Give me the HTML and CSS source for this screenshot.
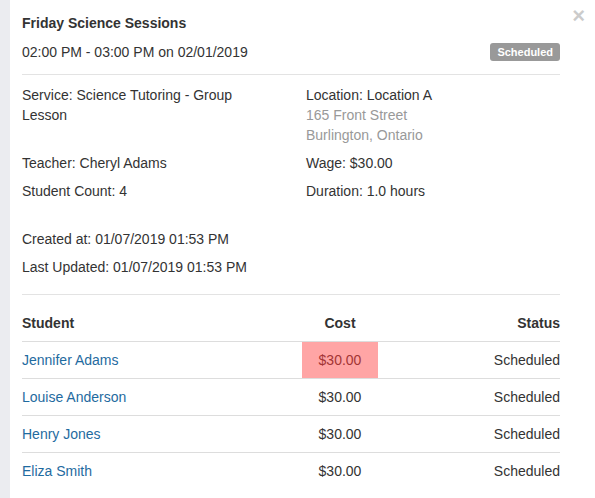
FILE: index.html
```html
<!DOCTYPE html>
<html>
<head>
<meta charset="utf-8">
<link rel="stylesheet" href="styles.css">
</head>
<body>
<div class="page">
  <div class="strip"></div>
  <div class="panel">
    <button class="close" aria-label="Close">&times;</button>
    <h4 class="title">Friday Science Sessions</h4>
    <div class="when">
      <span>02:00 PM - 03:00 PM on 02/01/2019</span>
      <span class="badge">Scheduled</span>
    </div>
    <hr class="rule">
    <div class="info">
      <div class="cell">Service: Science Tutoring - Group<br>Lesson</div>
      <div class="cell">Location: Location A<div class="addr">165 Front Street<br>Burlington, Ontario</div></div>
      <div class="cell">Teacher: Cheryl Adams</div>
      <div class="cell">Wage: $30.00</div>
      <div class="cell">Student Count: 4</div>
      <div class="cell">Duration: 1.0 hours</div>
    </div>
    <div class="meta">
      <p>Created at: 01/07/2019 01:53 PM</p>
      <p>Last Updated: 01/07/2019 01:53 PM</p>
    </div>
    <hr class="rule rule2">
    <table class="students">
      <colgroup><col class="c1"><col class="c2"><col class="c3"></colgroup>
      <thead>
        <tr><th class="l">Student</th><th class="c">Cost</th><th class="r">Status</th></tr>
      </thead>
      <tbody>
        <tr><td class="l"><a href="#">Jennifer Adams</a></td><td class="c hl">$30.00</td><td class="r">Scheduled</td></tr>
        <tr><td class="l"><a href="#">Louise Anderson</a></td><td class="c">$30.00</td><td class="r">Scheduled</td></tr>
        <tr><td class="l"><a href="#">Henry Jones</a></td><td class="c">$30.00</td><td class="r">Scheduled</td></tr>
        <tr><td class="l"><a href="#">Eliza Smith</a></td><td class="c">$30.00</td><td class="r">Scheduled</td></tr>
      </tbody>
    </table>
  </div>
</div>
</body>
</html>
```

FILE: styles.css
```css
html, body {
  margin: 0;
  padding: 0;
  background: #fff;
}
body {
  font-family: "Liberation Sans", Arial, sans-serif;
  font-size: 14px;
  line-height: 20px;
  color: #333;
}
.page {
  display: flex;
  min-height: 498px;
}
.strip {
  width: 10px;
  flex: none;
  background: #ebecf0;
}
.panel {
  position: relative;
  flex: 1;
  padding: 13px 35px 0 12px;
}
.close {
  position: absolute;
  top: 5px;
  right: 10px;
  border: 0;
  background: none;
  padding: 0;
  font-family: "Liberation Sans", Arial, sans-serif;
  font-size: 22px;
  font-weight: bold;
  line-height: 21px;
  color: #000;
  opacity: 0.2;
  cursor: pointer;
}
.title {
  margin: 0;
  font-size: 14px;
  line-height: 20px;
  font-weight: bold;
}
.when {
  margin-top: 9px;
  display: flex;
  justify-content: space-between;
  align-items: center;
}
.badge {
  display: inline-block;
  height: 18px;
  line-height: 18px;
  padding: 0 7px;
  background: #999;
  color: #fff;
  font-size: 11px;
  font-weight: bold;
  border-radius: 3px;
}
.rule {
  border: 0;
  border-top: 1px solid #e3e3e3;
  margin: 12px 0 10px;
}
.info {
  display: grid;
  grid-template-columns: 284px 1fr;
  row-gap: 8px;
}
.addr {
  color: #999;
}
.meta {
  margin-top: 28px;
}
.meta p {
  margin: 0 0 8px;
}
.rule2 {
  margin: 17px 0 10px;
}
.students {
  width: 100%;
  border-collapse: collapse;
  table-layout: fixed;
}
.c1 { width: 280px; }
.c2 { width: 76px; }
.students th, .students td {
  padding: 8px 0;
  line-height: 20px;
}
.students th {
  font-weight: bold;
  border-bottom: 1px solid #ddd;
}
.students td {
  border-bottom: 1px solid #ddd;
}
.students tbody tr:last-child td {
  border-bottom: 0;
}
.l { text-align: left; }
.c { text-align: center; }
.r { text-align: right; }
.hl {
  background: #ffa5a5;
  color: #a33535;
}
.students a {
  color: #1f6ba0;
  text-decoration: none;
}
```
